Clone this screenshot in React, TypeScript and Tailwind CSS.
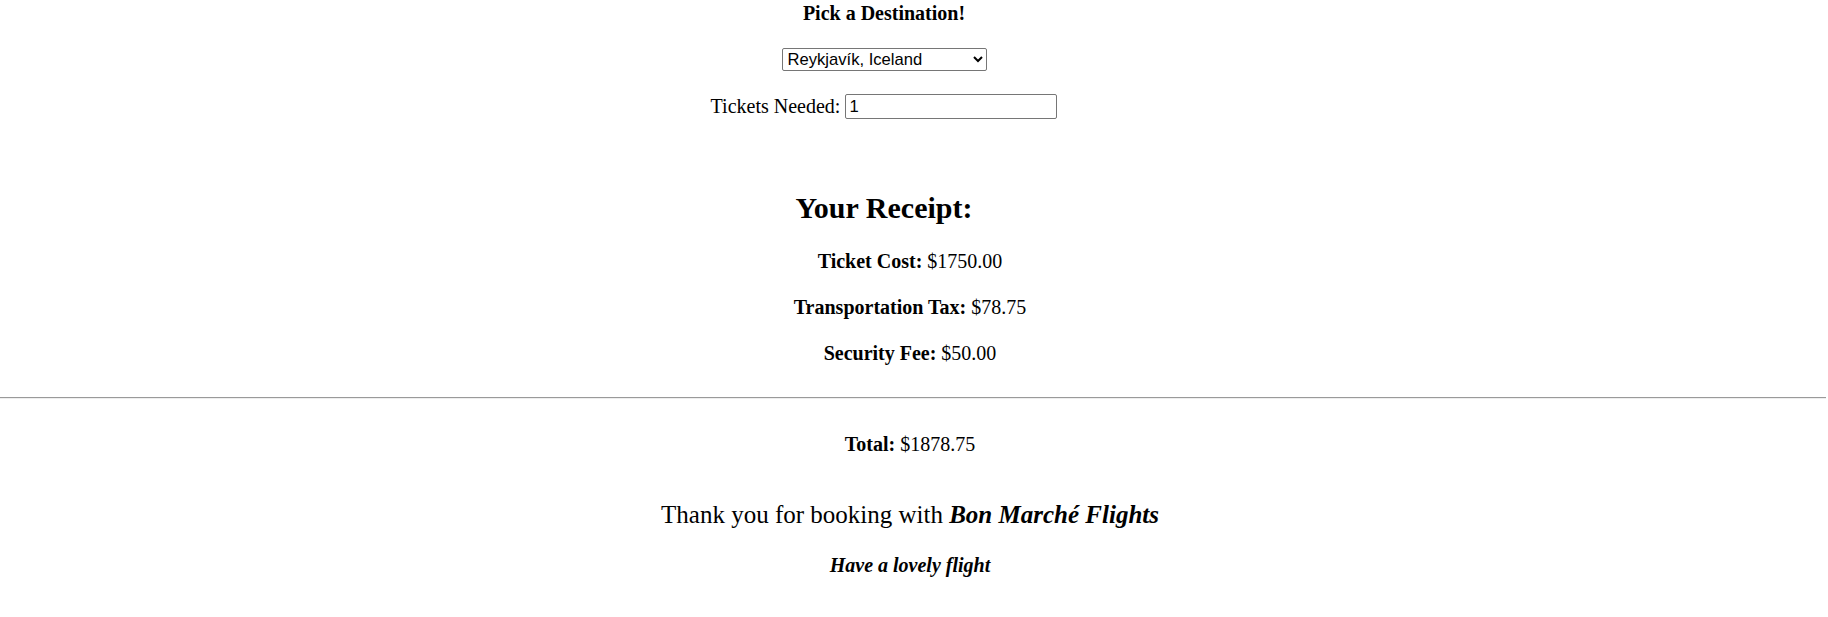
import { useState } from "react";

const serif = "font-['Liberation_Serif','Times_New_Roman',serif]";
const sans = "font-['Liberation_Sans',Arial,sans-serif]";

function ReceiptRow({ label, value }: { label: string; value: string }) {
  return (
    <div className="h-[46px] leading-[46px] text-[20px] text-center">
      <b>{label}</b> {value}
    </div>
  );
}

export default function App() {
  const [dest, setDest] = useState("rey");
  const [tickets, setTickets] = useState("1");

  return (
    <div className={`${serif} text-black bg-white w-full min-h-[617px] flex flex-col`}>
      {/* booking form */}
      <div className="flex flex-col items-center pr-[60px]">
        <div className="mt-[2px] h-[23px] leading-[23px] text-[20px] font-bold">Pick a Destination!</div>

        <select
          value={dest}
          onChange={(e) => setDest(e.target.value)}
          className={`${sans} mt-[23px] h-[23px] w-[205px] border border-[#767676] rounded-[2px] bg-white text-[16.6px] leading-[19px] pl-[1px]`}
        >
          <option value="rey">Reykjavík, Iceland</option>
          <option value="par">Paris, France</option>
          <option value="tok">Tokyo, Japan</option>
        </select>

        <div className="mt-[23px] h-[25px] flex items-center gap-[5px] text-[20px]">
          <span className="leading-[23px]">Tickets Needed:</span>
          <input
            value={tickets}
            onChange={(e) => setTickets(e.target.value)}
            className={`${sans} h-[25px] w-[212px] border border-[#767676] rounded-[2px] px-[3px] text-[16.6px] outline-none`}
          />
        </div>

        <h2 className="mt-[71px] h-[35px] leading-[35px] text-[30px] font-bold">Your Receipt:</h2>
      </div>

      <div className="mt-[13px] flex flex-col items-center pr-[8px]">
        <ReceiptRow label="Ticket Cost:" value="$1750.00" />
        <ReceiptRow label="Transportation Tax:" value="$78.75" />
        <ReceiptRow label="Security Fee:" value="$50.00" />
      </div>

      <div className="mt-[21px] w-full pr-[2px]">
        <hr className="border-0 border-t border-t-[#9a9a9a] border-b border-b-[#eeeeee] h-0" />
      </div>

      <div className="flex flex-col items-center pr-[8px]">
        <div className="mt-[34px] h-[23px] leading-[23px] text-[20px]">
          <b>Total:</b> $1878.75
        </div>

        <p className="mt-[44px] h-[29px] leading-[29px] text-[25px]">
          Thank you for booking with <b><i>Bon Marché Flights</i></b>
        </p>

        <p className="mt-[25px] h-[23px] leading-[23px] text-[20px] font-bold italic">Have a lovely flight</p>
      </div>
    </div>
  );
}
